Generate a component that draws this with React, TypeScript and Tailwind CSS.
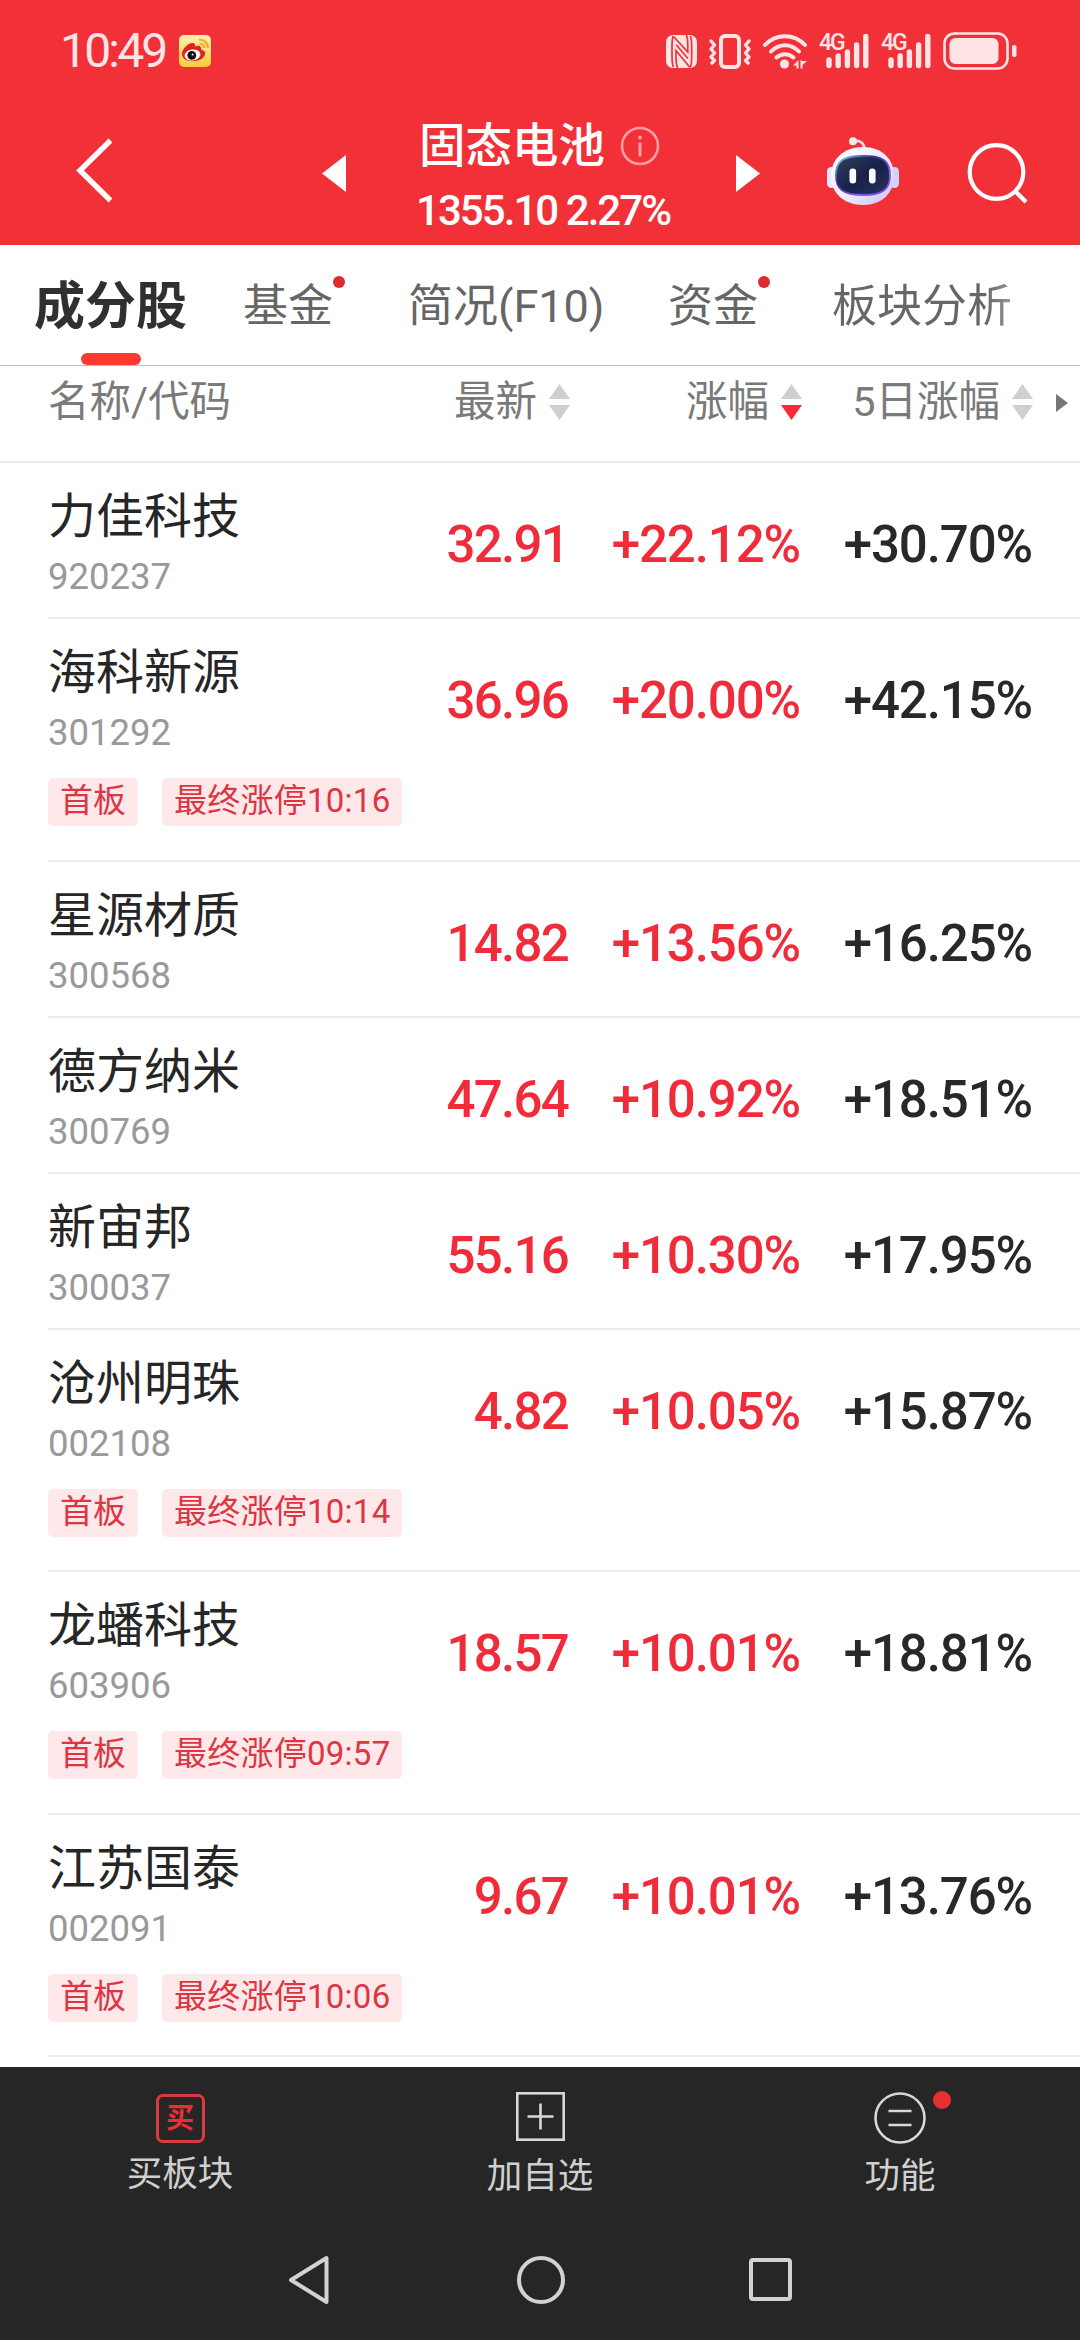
import React from "react";

type Stock = {
  name: string;
  code: string;
  price: string;
  change: string;
  fiveDay: string;
  limitUp?: string;
};

const STOCKS: Stock[] = [
  { name: "力佳科技", code: "920237", price: "32.91", change: "+22.12%", fiveDay: "+30.70%" },
  { name: "海科新源", code: "301292", price: "36.96", change: "+20.00%", fiveDay: "+42.15%", limitUp: "10:16" },
  { name: "星源材质", code: "300568", price: "14.82", change: "+13.56%", fiveDay: "+16.25%" },
  { name: "德方纳米", code: "300769", price: "47.64", change: "+10.92%", fiveDay: "+18.51%" },
  { name: "新宙邦", code: "300037", price: "55.16", change: "+10.30%", fiveDay: "+17.95%" },
  { name: "沧州明珠", code: "002108", price: "4.82", change: "+10.05%", fiveDay: "+15.87%", limitUp: "10:14" },
  { name: "龙蟠科技", code: "603906", price: "18.57", change: "+10.01%", fiveDay: "+18.81%", limitUp: "09:57" },
  { name: "江苏国泰", code: "002091", price: "9.67", change: "+10.01%", fiveDay: "+13.76%", limitUp: "10:06" },
];

function WeiboIcon() {
  return (
    <svg className="ml-[13px] h-8 w-8" viewBox="0 0 32 32">
      <defs>
        <linearGradient id="wb" x1="0" y1="0" x2="0" y2="1">
          <stop offset="0" stopColor="#fff0b4" />
          <stop offset="1" stopColor="#fcc93a" />
        </linearGradient>
      </defs>
      <rect width="32" height="32" rx="5" fill="url(#wb)" />
      <path d="M3 19c0-5 6-11 10.500-11 2.500 0 3 1.500 2.500 3.500 3-1.300 6.500-1.300 6 2 0 .8 0 1 .8 1.300 5 1.700 4 6 0 9-5 3.500-19.800 4-19.800-4.800z" fill="#dc2420" />
      <ellipse cx="13.500" cy="20" rx="8" ry="5.500" transform="rotate(-8 13.500 20)" fill="#fff" />
      <circle cx="12.800" cy="20.300" r="4.400" fill="#111" />
      <circle cx="13.600" cy="19.500" r="1" fill="#fff" />
      <path d="M20 4.500c5 0 9 3.500 8.800 8.500M20.500 8.500c3 0 4.700 2 4.600 4.500" fill="none" stroke="#efaa30" strokeWidth="2.200" />
    </svg>
  );
}

function NfcIcon() {
  return (
    <svg className="h-[33px] w-[31px]" viewBox="0 0 31 33">
      <rect width="31" height="33" rx="7" fill="#ffe4e6" />
      <g fill="none" stroke="#f23038" strokeWidth="1.700">
        <path d="M7 1C6 5 6 8 6 11v11c0 4 .3 7 1.200 10" />
        <path d="M7.500 1.500 21.800 17V9c0-3-.3-6-1.300-9" />
        <path d="M24 32.500 10 15.500V23c0 4 .5 7 1.500 10" />
        <path d="M10.300 10 22 23.500" />
        <path d="M24.500 1c.9 3 1.200 6 1.200 10v11c0 4-.2 7-1.200 10" />
      </g>
    </svg>
  );
}

function VibrateIcon() {
  return (
    <svg className="ml-[12px] h-[35px] w-[42px]" viewBox="0 0 42 35" fill="none" stroke="#ffe4e6">
      <rect x="12" y="2" width="18" height="31" rx="4" strokeWidth="4" />
      <path d="M2 7l3.500 4L2 15l3.500 4L2 23l3.500 3.500L3 29M40 7l-3.500 4 3.500 4-3.500 4 3.500 4-3.500 3.500L39 29" strokeWidth="3.400" strokeLinejoin="round" strokeLinecap="round" />
    </svg>
  );
}

function WifiIcon() {
  return (
    <svg className="ml-[12px] h-[35px] w-[44px]" viewBox="0 0 44 35">
      <g fill="none" stroke="#ffe4e6" strokeWidth="4" strokeLinecap="round">
        <path d="M2 11C13-.7 31-.7 42 11" />
        <path d="M8 17.500C16 9 28 9 36 17.500" />
        <path d="M13.500 23.500c5-4.500 12-4.500 17 0" />
      </g>
      <circle cx="21.500" cy="30" r="4.600" fill="#ffe4e6" />
      <path d="M35.500 26v8.500h-2v-3H30zM37.500 26v8.500h2v-3.500l4.500-4h-4.500z" fill="#ffe4e6" />
    </svg>
  );
}

function Signal() {
  return (
    <div className="relative h-[36px] w-[50px]">
      <svg className="h-[36px] w-[50px]" viewBox="0 0 50 36" stroke="#ffe4e6" strokeWidth="5.400" strokeLinecap="round">
        <path d="M10 27v5.500M19.200 23v9.500M28.400 19v13.500M37.600 12v20.500M46.800 3.500v29" />
      </svg>
      <span className="absolute top-0 left-0 text-[23px] font-medium leading-5 tracking-[-2px] text-[#ffe4e6]">4G</span>
    </div>
  );
}

function BatteryIcon() {
  return (
    <svg className="ml-[12px] h-[38px] w-[74px]" viewBox="0 0 74 38">
      <rect x="1.500" y="1.500" width="63" height="35" rx="10" fill="none" stroke="#ffe4e6" strokeWidth="2.600" />
      <rect x="6.500" y="6" width="49" height="26" rx="6" fill="#ffe4e6" />
      <rect x="69" y="13" width="4.500" height="12" rx="2" fill="#ffe4e6" />
    </svg>
  );
}

function StatusBar() {
  return (
    <div className="flex h-[102px] items-center pl-[60px] pr-[63px]">
      <span className="text-[48px] leading-none tracking-[-2.800px] text-[#ffe4e6]">10:49</span>
      <WeiboIcon />
      <div className="ml-auto flex items-center">
        <NfcIcon />
        <VibrateIcon />
        <WifiIcon />
        <div className="ml-[12px] flex gap-[12px]">
          <Signal />
          <Signal />
        </div>
        <BatteryIcon />
      </div>
    </div>
  );
}

function RobotIcon() {
  return (
    <svg className="ml-[66px] h-[68px] w-[74px]" viewBox="0 0 74 68">
      <defs>
        <linearGradient id="shell" x1="0" y1="0" x2="1" y2="1">
          <stop offset="0" stopColor="#ffffff" />
          <stop offset=".55" stopColor="#eeeafc" />
          <stop offset="1" stopColor="#c3c4f3" />
        </linearGradient>
        <linearGradient id="rim" x1="0" y1="0" x2="1" y2="1">
          <stop offset="0" stopColor="#7de3f2" />
          <stop offset=".35" stopColor="#3b2c94" />
          <stop offset=".7" stopColor="#8a5cf0" />
          <stop offset="1" stopColor="#6a2be0" />
        </linearGradient>
        <linearGradient id="face" x1="0" y1="0" x2="1" y2="1">
          <stop offset="0" stopColor="#36405f" />
          <stop offset=".5" stopColor="#16224a" />
          <stop offset="1" stopColor="#2a3358" />
        </linearGradient>
      </defs>
      <path d="M27 4.500c6-2 11 1 11.500 7" fill="none" stroke="#f6dfe8" strokeWidth="2.600" />
      <circle cx="27" cy="4.300" r="4" fill="#fbe9f0" />
      <rect x="1" y="30" width="9" height="21" rx="4.500" fill="#e9e6fb" />
      <rect x="64" y="30" width="9" height="21" rx="4.500" fill="#d3d3f7" />
      <path d="M37 10c19 0 31 12 31 29S56 68 37 68 5 56 5 39s13-29 32-29z" fill="url(#shell)" />
      <path d="M37 19c20 0 27 5 27 19s-7 20-27 20-27-6-27-20 7-19 27-19z" fill="url(#face)" stroke="url(#rim)" strokeWidth="1.800" />
      <rect x="23.500" y="31.500" width="6.600" height="15" rx="3.300" fill="#fff" />
      <rect x="43" y="31.500" width="6.600" height="15" rx="3.300" fill="#fff" />
    </svg>
  );
}

function TitleBar() {
  return (
    <div className="flex h-[143px] items-start">
      <svg className="ml-[76px] mt-[36px] h-[66px] w-[38px]" viewBox="0 0 38 66">
        <path d="M34.500 2.500 4 32.500l30.500 30" fill="none" stroke="#fff" strokeWidth="5.400" />
      </svg>
      <svg className="ml-[208px] mt-[53px] h-[37px] w-6" viewBox="0 0 24 37">
        <path d="M0 18.500 24 0v37z" fill="#fff" />
      </svg>
      <div className="ml-[70px] mt-[18px] flex w-[256px] flex-col">
        <div className="flex items-center pl-[3px]">
          <span className="text-[46.500px] font-medium leading-[52px] text-white">固态电池</span>
          <svg className="ml-[15px] h-10 w-10" viewBox="0 0 40 40">
            <circle cx="20" cy="20" r="18" fill="none" stroke="#ff9ea2" strokeWidth="2.600" />
            <path d="M20 16.500v14" stroke="#ff9ea2" strokeWidth="3" />
            <circle cx="20" cy="11.500" r="2" fill="#ff9ea2" />
          </svg>
        </div>
        <span className="mt-[16px] whitespace-nowrap text-[42px] font-medium leading-[46px] tracking-[-1.950px] text-white">1355.10 2.27%</span>
      </div>
      <svg className="ml-[64px] mt-[53px] h-[37px] w-6" viewBox="0 0 24 37">
        <path d="M24 18.500 0 0v37z" fill="#fff" />
      </svg>
      <div className="mt-[35px]">
        <RobotIcon />
      </div>
      <svg className="ml-[67px] mt-[40px] h-[62px] w-[62px]" viewBox="0 0 62 62" fill="none" stroke="#fff" strokeWidth="4.200">
        <circle cx="29.500" cy="30" r="26.800" />
        <path d="M48 49l11 11" />
      </svg>
    </div>
  );
}

function Tab({ label, dot = false }: { label: string; dot?: boolean }) {
  return (
    <span className="relative whitespace-nowrap">
      {label}
      {dot && <span className="absolute -right-[12px] -top-[4px] h-3 w-3 rounded-full bg-[#dc2c30]" />}
    </span>
  );
}

function Tabs() {
  return (
    <div className="relative flex h-[121px] items-center border-b border-[#bdbdbd] pl-[34px] pt-[3px] text-[45px] leading-[50px] text-[#666]">
      <span className="w-[209px] text-[51px] font-bold text-[#303030]">成分股</span>
      <span className="w-[165px]"><Tab label="基金" dot /></span>
      <span className="w-[260px]"><Tab label="简况(F10)" /></span>
      <span className="w-[164px]"><Tab label="资金" dot /></span>
      <span className="whitespace-nowrap bg-linear-to-r from-[#666] from-85% to-[#999] bg-clip-text text-transparent">板块分析</span>
      <span className="absolute bottom-0 left-[81px] h-[12px] w-[60px] rounded-full bg-[#fc3a32]" />
    </div>
  );
}

function SortArrows({ down = false }: { down?: boolean }) {
  return (
    <svg className="ml-[12px] h-[36px] w-[21px]" viewBox="0 0 21 36">
      <path d="M10.500 0 21 15H0z" fill="#cfcfcf" />
      <path d="M10.500 36 21 21H0z" fill={down ? "#fa2a37" : "#cfcfcf"} />
    </svg>
  );
}

function TableHead() {
  return (
    <div className="flex h-[97px] items-start border-b-2 border-[#ebebeb] pl-12 pt-[13px] text-[41.500px] leading-[46px] text-[#7a7a7a]">
      <span className="w-[300px]">名称/代码</span>
      <span className="flex w-[222px] items-center justify-end">最新<SortArrows /></span>
      <span className="flex w-[232px] items-center justify-end">涨幅<SortArrows down /></span>
      <span className="flex w-[231px] items-center justify-end whitespace-nowrap">5日涨幅<SortArrows /></span>
      <svg className="ml-[23px] mt-[15px] h-[18px] w-3" viewBox="0 0 12 18">
        <path d="M12 9 0 0v18z" fill="#777" />
      </svg>
    </div>
  );
}

function Tag({ children }: { children: React.ReactNode }) {
  return (
    <span className="h-12 rounded-[5px] bg-[#ffe8ea] px-3 text-[33px] leading-[46px] text-[#dd3541]">{children}</span>
  );
}

function StockRow({ stock }: { stock: Stock }) {
  return (
    <div className={stock.limitUp ? "ml-12 h-[242.500px] border-b-2 border-[#ededed]" : "ml-12 h-[156px] border-b-2 border-[#ededed]"}>
      <div className="flex">
        <div className="w-[300px] pt-[26px]">
          <div className="text-[48px] leading-[56px] text-[#262626]">{stock.name}</div>
          <div className="mt-3 text-[36.500px] leading-10 text-[#999]">{stock.code}</div>
        </div>
        <div className="flex h-[163px] text-right text-[51px] font-medium leading-[164px] tracking-[-1.100px] text-[#f12c3a]">
          <span className="w-[220px] tracking-[-1.700px]">{stock.price}</span>
          <span className="w-[232px]">{stock.change}</span>
          <span className="w-[232px] text-[#282828]">{stock.fiveDay}</span>
        </div>
      </div>
      {stock.limitUp && (
        <div className="-mt-[4px] flex gap-6">
          <Tag>首板</Tag>
          <Tag><span className="tracking-[0.250px]">最终涨停{stock.limitUp}</span></Tag>
        </div>
      )}
    </div>
  );
}

function BottomBar() {
  return (
    <div className="grid h-[150px] grid-cols-3 text-center text-[35.500px] leading-10 text-[#d0d0d0]">
      <div className="flex flex-col items-center pt-[27px]">
        <div className="h-[49px] w-[49px] rounded-[7px] border-[3px] border-[#d93a42] text-center text-[28px] font-bold leading-[44px] text-[#f02c3a]">买</div>
        <span className="mt-[11px]">买板块</span>
      </div>
      <div className="flex flex-col items-center pt-[25px]">
        <svg className="h-[49px] w-[49px]" viewBox="0 0 49 49" fill="none" stroke="#d8d8d8" strokeWidth="2.600">
          <rect x="1.300" y="1.300" width="46.400" height="46.400" />
          <path d="M11.500 24.500h26M24.500 11.500v26" />
        </svg>
        <span className="mt-[15px]">加自选</span>
      </div>
      <div className="flex flex-col items-center pt-[25px]">
        <div className="relative">
          <svg className="h-[52px] w-[52px]" viewBox="0 0 52 52" fill="none" stroke="#d8d8d8" strokeWidth="2.600">
            <circle cx="26" cy="26" r="24.500" />
            <path d="M14.500 19h23M14.500 33h23" />
          </svg>
          <span className="absolute -right-[25px] -top-px h-[18px] w-[18px] rounded-full bg-[#e93030]" />
        </div>
        <span className="mt-[12px]">功能</span>
      </div>
    </div>
  );
}

function SystemNav() {
  return (
    <div className="flex h-[123px] items-center justify-center pt-[2px]">
      <svg className="h-[50px] w-[42px]" viewBox="0 0 42 50">
        <path d="M3 25 38.500 3v44z" fill="none" stroke="#d2d2d2" strokeWidth="4" strokeLinejoin="round" />
      </svg>
      <div className="ml-[187px] h-[48px] w-[48px] rounded-full border-4 border-[#d2d2d2]" />
      <div className="ml-[184px] h-[43px] w-[43px] rounded-[4px] border-4 border-[#d2d2d2]" />
    </div>
  );
}

export default function App() {
  return (
    <div className="flex h-[2340px] w-[1080px] flex-col overflow-hidden bg-white font-['Roboto','Noto_Sans_CJK_SC',sans-serif]">
      <header className="h-[245px] shrink-0 bg-[#f23038]">
        <StatusBar />
        <TitleBar />
      </header>
      <div className="shrink-0">
        <Tabs />
        <TableHead />
      </div>
      <main className="h-[1604px] shrink-0 overflow-hidden">
        {STOCKS.map((s) => (
          <StockRow key={s.code} stock={s} />
        ))}
      </main>
      <footer className="h-[273px] shrink-0 bg-[#262626]">
        <BottomBar />
        <SystemNav />
      </footer>
    </div>
  );
}
